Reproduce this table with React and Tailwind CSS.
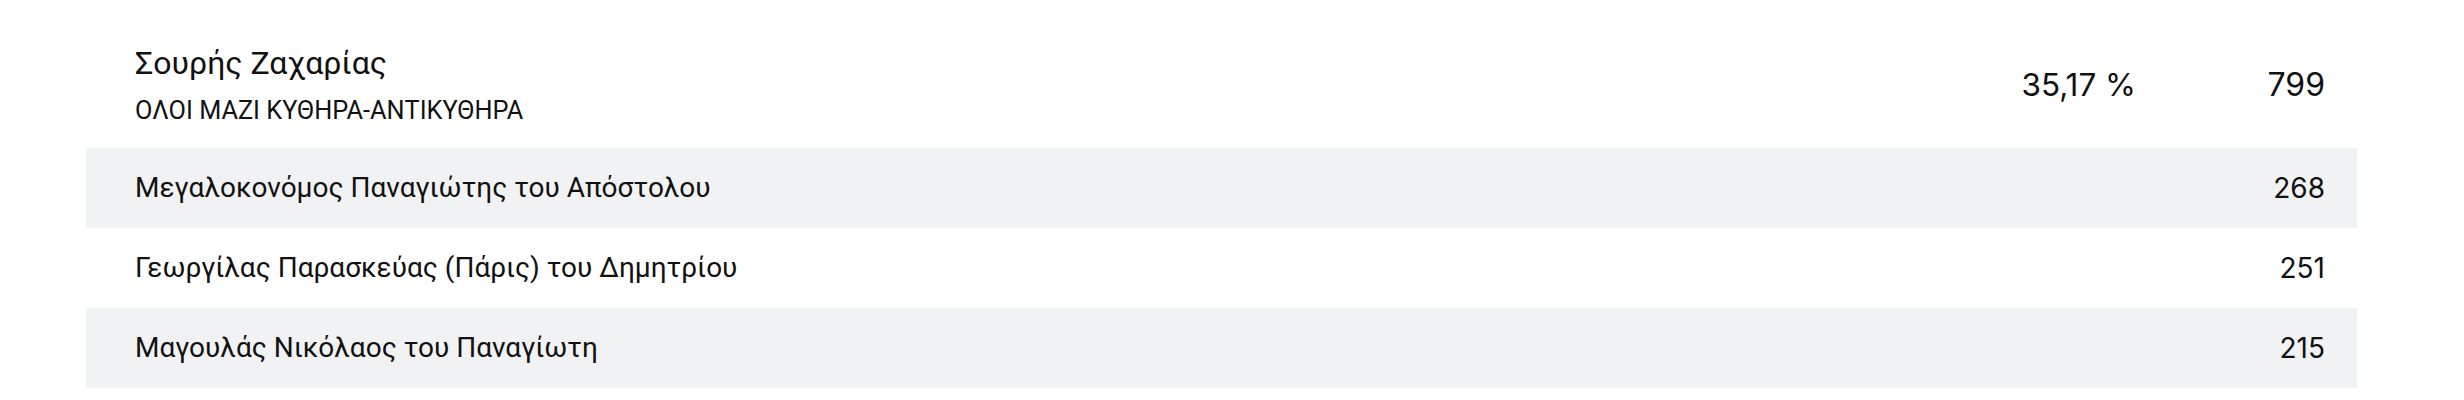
import React from "react";

const rows = [
  { name: "Μεγαλοκονόμος Παναγιώτης του Απόστολου", votes: 268 },
  { name: "Γεωργίλας Παρασκεύας (Πάρις) του Δημητρίου", votes: 251 },
  { name: "Μαγουλάς Νικόλαος του Παναγίωτη", votes: 215 },
];

const App = () => {
  return (
    <div className="w-full bg-white text-[#111] font-['Roboto','Noto_Sans',sans-serif]">
      <div className="ml-[86px] w-[2271px]">
        <div className="flex items-center pl-[49px] pr-[32px] pt-[43px] pb-[21px]">
          <div className="flex-1">
            <p className="text-[32px] leading-[40px]">Σουρής Ζαχαρίας</p>
            <p className="mt-[12px] text-[25.3px] leading-[32px]">ΟΛΟΙ ΜΑΖΙ ΚΥΘΗΡΑ-ΑΝΤΙΚΥΘΗΡΑ</p>
          </div>
          <div className="font-['Inter',sans-serif] text-[31.5px] leading-[40px]">35,17 %</div>
          <div className="w-[189px] text-right font-['Inter',sans-serif] text-[32px] leading-[40px]">799</div>
        </div>

        {rows.map((row, i) => (
          <div
            key={row.name}
            className={`flex h-[80px] items-center pl-[49px] pr-[32px] text-[28px] ${
              i % 2 === 0 ? "bg-[#f1f2f4]" : "bg-white"
            }`}
          >
            <span className="flex-1">{row.name}</span>
            <span className="text-right font-['Inter',sans-serif]">{row.votes}</span>
          </div>
        ))}
      </div>
    </div>
  );
};

export default App;
